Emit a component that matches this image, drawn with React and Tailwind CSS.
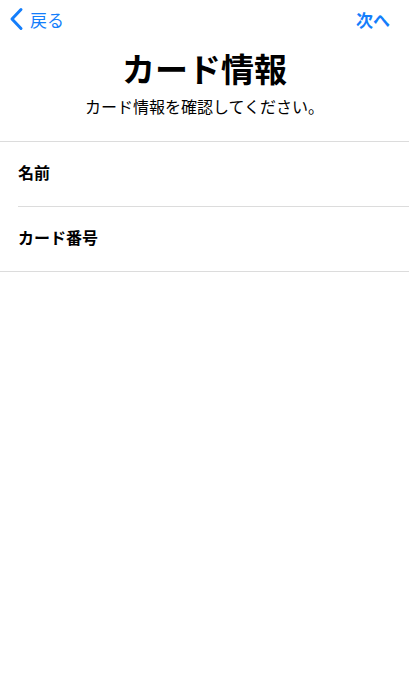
import React from "react";

const font = { fontFamily: '"Noto Sans CJK JP", "Noto Sans", sans-serif' };

export default function App() {
  return (
    <div className="w-[409px] h-[700px] bg-white text-black" style={font}>
      <div className="flex items-center justify-between h-[38px] pl-[9px] pr-[19px]">
        <div className="flex items-center gap-[6px] text-[#147efb]">
          <svg width="15" height="24" viewBox="0 0 15 24" fill="none">
            <path d="M12 2.5 L3 12 L12 21.5" stroke="#147efb" strokeWidth="3" strokeLinecap="round" strokeLinejoin="round" />
          </svg>
          <span className="text-[17px] leading-none">戻る</span>
        </div>
        <span className="text-[17px] leading-none font-bold text-[#147efb]">次へ</span>
      </div>
      <h1 className="text-center text-[33px] font-bold leading-none mt-[14px]">カード情報</h1>
      <p className="text-center text-[16px] leading-none mt-[13px]">カード情報を確認してください。</p>
      <div className="mt-[27px] border-t border-[#dcdcdc]">
        <div className="ml-[18px] border-b border-[#dcdcdc] h-[65px] flex items-center pb-[5px]">
          <span className="text-[16px] leading-none font-bold">名前</span>
        </div>
        <div className="border-b border-[#dcdcdc] h-[65px] flex items-center pl-[18px] pb-[5px]">
          <span className="text-[16px] leading-none font-bold">カード番号</span>
        </div>
      </div>
    </div>
  );
}
